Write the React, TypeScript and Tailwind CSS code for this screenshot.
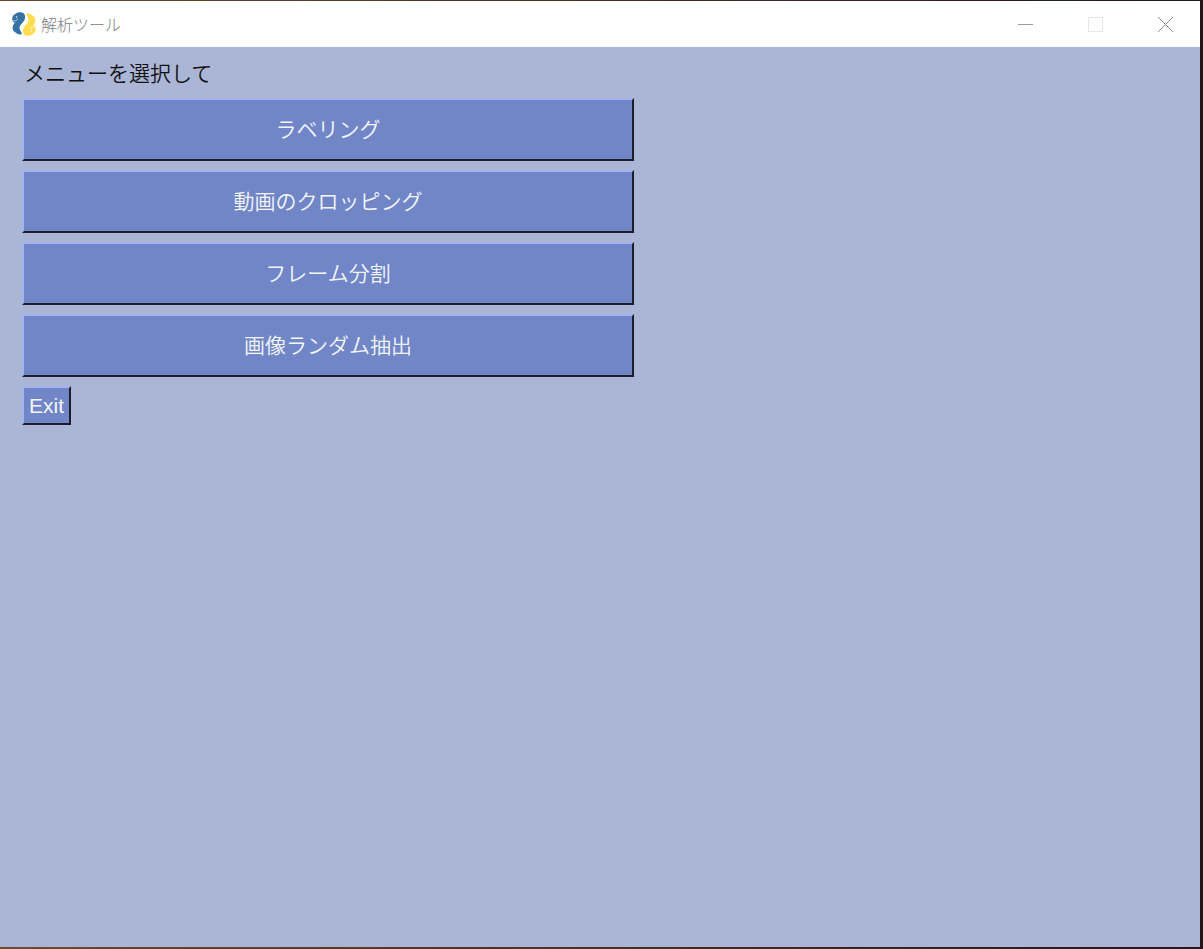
import type { ReactNode } from "react";

const menuItems = ["ラベリング", "動画のクロッピング", "フレーム分割", "画像ランダム抽出"];

function AppLogo() {
  return (
    <svg className="h-6 w-6 shrink-0" viewBox="0 0 24 24" aria-hidden="true">
      <path
        d="M3.500 2.600C4.600 1 6 .8 8 .8c2.800 0 4.500 1.400 4.500 4.200 0 2-.5 3.300-2 4.800L8.300 12.400c-1 1.100-1.400 2-1.400 3.400 0 1.900.5 3.300 2.100 5.200.4.500.2 1-.5 1-1.900.1-3.300-.4-4.300-1.800C2.300 19.500 1.200 17.500 1.200 15.200c0-1.700.8-2.900 2.300-4.300l.6-.7C2 10.300.8 9.300.8 7.200c0-2 1-3.900 2.700-4.600Z"
        fill="#3672a4"
        stroke="#3672a4"
        strokeWidth="1.200"
      />
      <path
        d="M20.500 21.400c-1.100 1.600-2.500 1.800-4.500 1.800-2.800 0-4.500-1.400-4.500-4.200 0-2 .5-3.300 2-4.800l2.200-2.600c1-1.100 1.400-2 1.400-3.400 0-1.900-.5-3.300-2.100-5.200-.4-.5-.2-1 .5-1 1.900-.1 3.300.4 4.300 1.800C21.700 4.500 22.800 6.500 22.800 8.800c0 1.700-.8 2.900-2.300 4.300l-.6.7c2.100-.1 3.300.9 3.300 3 0 2-1 3.900-2.700 4.600Z"
        fill="#ffdc50"
        stroke="#ffdc50"
        strokeWidth="1.200"
      />
      <path d="M.6 8.500c1.800.8 4.200.4 5.200-1.500" fill="none" stroke="#dce9f3" strokeWidth="0.700" />
      <path d="M23.400 15.500c-1.800-.8-4.200-.4-5.200 1.500" fill="none" stroke="#fffbe0" strokeWidth="0.700" />
      <circle cx="4.600" cy="5" r="0.700" fill="#fff" />
      <circle cx="19.400" cy="19" r="0.700" fill="#fff" />
    </svg>
  );
}

function WindowButton({ label, disabled, children }: { label: string; disabled?: boolean; children: ReactNode }) {
  return (
    <button type="button" aria-label={label} disabled={disabled} className="flex h-full w-[70px] items-center justify-center">
      <svg className="h-[15px] w-[15px]" viewBox="0 0 15 15" fill="none" shapeRendering="crispEdges" aria-hidden="true">
        {children}
      </svg>
    </button>
  );
}

const raised =
  "border-2 border-t-[#a4b4f0] border-l-[#a4b4f0] border-r-[#1b1d2b] border-b-[#1b1d2b] bg-[#7186c7] text-[21px] leading-[21px] font-[350] text-[#f4f6fc]";

export default function App() {
  return (
    <div className="flex min-h-screen flex-col bg-linear-to-r from-[#6d4a30] to-[#21171a] pt-px pr-[3px] pb-[2px]">
      <header className="flex h-[46px] items-center justify-between bg-white pl-3">
        <div className="flex items-center gap-[5px]">
          <AppLogo />
          <h1 className="font-['Noto_Sans_CJK_JP',sans-serif] text-[16px] leading-6 font-light text-[#808080]">
            解析ツール
          </h1>
        </div>
        <div className="flex h-full">
          <WindowButton label="最小化">
            <path d="M0 7.500h15" stroke="#999" />
          </WindowButton>
          <WindowButton label="最大化" disabled>
            <path d="M.5.5h14v14H.5z" stroke="#e6e6e6" />
          </WindowButton>
          <WindowButton label="閉じる">
            <path d="M0 0l15 15M15 0L0 15" stroke="#8c8c8c" shapeRendering="auto" />
          </WindowButton>
        </div>
      </header>
      <main className="flex-1 bg-[#abb5d5] px-[22px] pt-3 font-['Liberation_Sans','Noto_Sans_CJK_JP',sans-serif]">
        <p className="pl-[2px] text-[21px] leading-[30px] font-[350] text-[#111]">メニューを選択して</p>
        <div className="mt-[9px] flex max-w-[612px] flex-col items-start gap-[9px]">
          {menuItems.map((item) => (
            <button key={item} type="button" className={`${raised} h-[63px] w-full`}>
              {item}
            </button>
          ))}
          <button type="button" className={`${raised} h-[39px] px-[5px]`}>
            Exit
          </button>
        </div>
      </main>
    </div>
  );
}
